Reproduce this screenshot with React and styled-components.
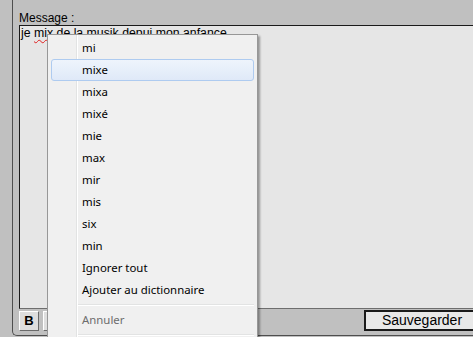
import React from "react";
import styled, { createGlobalStyle } from "styled-components";

const GlobalStyle = createGlobalStyle`
  html, body { margin: 0; padding: 0; background: #c0c0c0; overflow: hidden; }
  * { box-sizing: border-box; }
`;

const Page = styled.div`
  position: relative;
  width: 473px;
  height: 337px;
  overflow: hidden;
  background: #c0c0c0;
  padding-left: 12px;
`;

const Panel = styled.div`
  width: 480px;
  height: 336px;
  border-left: 1px solid #4e4e4e;
  border-bottom: 1px solid #4e4e4e;
  border-bottom-left-radius: 5px;
  padding: 11px 0 0 6px;
  display: flex;
  flex-direction: column;
`;

const Label = styled.div`
  font: 12px/14px "Liberation Sans", Arial, sans-serif;
  color: #000;
`;

const Editor = styled.div`
  flex: 1;
  background: #e6e6e6;
  border-top: 1px solid #1a1a1a;
  border-left: 1px solid #1a1a1a;
  border-bottom: 1px solid #6e6e6e;
  padding: 0 1px;
  font: 12.3px/14px "Liberation Sans", Arial, sans-serif;
  color: #000;
  white-space: nowrap;
`;

const Misspelled = styled.span`
  text-decoration: underline wavy #e02020;
  text-decoration-thickness: 1px;
  text-underline-offset: 2px;
`;

const Toolbar = styled.div`
  height: 26px;
  display: flex;
  align-items: flex-start;
  gap: 4px;
  padding: 1px 12px 0 0;
`;

const FormatButton = styled.button`
  margin-top: 1px;
  width: 20px;
  height: 20px;
  padding: 0;
  background: #dedede;
  border: 1px solid;
  border-color: #ffffff #6a6a6a #6a6a6a #ffffff;
  font: ${(p) => (p.$italic ? "italic" : "normal")} bold 13px/16px "Liberation Sans", Arial, sans-serif;
  color: #000;
`;

const SaveButton = styled.button`
  margin-left: auto;
  width: 116px;
  height: 21px;
  padding: 0;
  background: #e8e8e8;
  border: 2px solid #1a1a1a;
  font: 14px/17px "Liberation Sans", Arial, sans-serif;
  color: #000;
`;

const Menu = styled.div`
  position: absolute;
  left: 47px;
  top: 34px;
  width: 211px;
  background: #f0f0f0;
  border: 1px solid #979797;
  box-shadow: 2px 2px 2px rgba(0, 0, 0, 0.35);
  padding: 2px 3px 0;
  font: 11.4px/20px "Noto Sans", "Open Sans", sans-serif;
  color: #000;
  &::before {
    content: "";
    position: absolute;
    left: 28px;
    top: 0;
    bottom: 0;
    width: 1px;
    background: #e2e3e3;
    box-shadow: 1px 0 0 #ffffff;
  }
`;

const MenuItem = styled.div`
  position: relative;
  height: 22px;
  padding-left: 30px;
  border: 1px solid ${(p) => (p.$active ? "#aecbf0" : "transparent")};
  border-radius: 3px;
  background: ${(p) =>
    p.$active ? "linear-gradient(#eef4fc, #dfe9f8)" : "transparent"};
  color: ${(p) => (p.$disabled ? "#6d6d6d" : "#000")};
`;

const Separator = styled.div`
  height: 8px;
  margin-left: 27px;
  padding-top: 3px;
  &::after {
    content: "";
    display: block;
    height: 1px;
    background: #e2e3e3;
    box-shadow: 0 1px 0 #ffffff;
  }
`;

const suggestions = ["mi", "mixe", "mixa", "mixé", "mie", "max", "mir", "mis", "six", "min"];

export default function App() {
  return (
    <Page>
      <GlobalStyle />
      <Panel>
        <Label>Message :</Label>
        <Editor>
          je <Misspelled>mix</Misspelled> de la musik depui mon anfance
        </Editor>
        <Toolbar>
          <FormatButton>B</FormatButton>
          <FormatButton $italic>I</FormatButton>
          <FormatButton>U</FormatButton>
          <SaveButton>Sauvegarder</SaveButton>
        </Toolbar>
      </Panel>
      <Menu>
        {suggestions.map((s, i) => (
          <MenuItem key={s} $active={i === 1}>
            {s}
          </MenuItem>
        ))}
        <MenuItem>Ignorer tout</MenuItem>
        <MenuItem>Ajouter au dictionnaire</MenuItem>
        <Separator />
        <MenuItem $disabled>Annuler</MenuItem>
        <Separator />
      </Menu>
    </Page>
  );
}
